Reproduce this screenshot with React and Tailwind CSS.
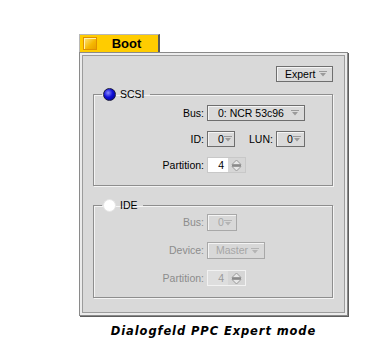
import React from "react";

const Arrow = ({ dim }) => (
  <svg width="8" height="6" viewBox="0 0 8 6" className="shrink-0">
    <line x1="0" y1="0.5" x2="8" y2="0.5" stroke={dim ? "#b4b4b4" : "#9a9a9a"} />
    <path d="M1 2 L7 2 L4 5.5 Z" fill={dim ? "#b4b4b4" : "#9a9a9a"} />
  </svg>
);

const Popup = ({ label, w, h = "h-[16px]", dim, pl = "pl-[10px]" }) => (
  <div
    className={`${w} ${h} ${pl} pr-[5px] shrink-0 justify-self-start flex items-center justify-between border ${
      dim
        ? "border-[#a8a8a8] text-[#a6a6a6] bg-[#d8d8d8]"
        : "border-[#6e6e6e] text-black bg-[#dadada]"
    } shadow-[inset_1px_1px_0_#f4f4f4]`}
  >
    <span className="leading-none">{label}</span>
    <Arrow dim={dim} />
  </div>
);

const Spinner = ({ dim }) => (
  <div className={`flex justify-self-start h-[16px] border ${dim ? "border-[#f2f2f2]" : "border-[#c8c8c8]"}`}>
    <div
      className={`w-[20px] flex items-center justify-end pr-[4px] leading-none ${
        dim ? "bg-[#dedede] text-[#9a9a9a]" : "bg-white text-black"
      }`}
    >
      4
    </div>
    <div className="w-[17px] flex items-center justify-center bg-[#d6d6d6]">
      <svg width="11" height="13" viewBox="0 0 11 13" className="shrink-0">
        <path d="M1 5.5 L5.5 1 L10 5.5 Z" fill="#e8e8e8" stroke="#9a9a9a" />
        <path d="M1 7.5 L5.5 12 L10 7.5 Z" fill="#e8e8e8" stroke="#9a9a9a" />
        <line x1="1" y1="6.5" x2="10" y2="6.5" stroke="#8a8a8a" />
      </svg>
    </div>
  </div>
);

const Group = ({ title, active, children, pt, pb, gap }) => (
  <fieldset className="border border-[#8e8e8e] shadow-[inset_1px_1px_0_#f4f4f4,1px_1px_0_#f4f4f4] p-0 m-0 min-w-0">
    <legend className="ml-[8px] pl-[1px] pr-[5px] h-[14px] flex items-center gap-[4px]">
      {active ? (
        <span className="w-[13px] h-[13px] rounded-full border border-[#1a1a40] bg-[radial-gradient(circle_at_38%_35%,#8a8aff_0%,#1010d8_45%,#00007a_100%)]" />
      ) : (
        <span className="w-[13px] h-[13px] rounded-full bg-white border border-[#e6e6e6]" />
      )}
      <span className="text-black leading-none">{title}</span>
    </legend>
    <div className={`grid grid-cols-[110px_auto] justify-items-start gap-x-[3px] ${gap} items-center ${pt} ${pb}`}>
      {children}
    </div>
  </fieldset>
);

const Label = ({ children, dim }) => (
  <div className={`justify-self-stretch text-right leading-none ${dim ? "text-[#8c8c8c]" : "text-black"}`}>{children}</div>
);

export default function App() {
  return (
    <div className="min-h-screen bg-white pt-[34px] pl-[79px] font-['Liberation_Sans',Arial,sans-serif] text-[10.5px]">
      <div className="w-[269px]">
        {/* tab */}
        <div className="w-[81px] h-[18px] bg-[#ffcc00] border-t border-l border-[#b8b8b8] border-r-2 border-r-[#5a5a5a] flex items-center pl-[3px]">
          <span className="w-[14px] h-[13px] border border-[#e09000] bg-[linear-gradient(135deg,#ffe680,#f5b800_60%,#e8a000)] shadow-[inset_1px_1px_0_#fff2b0]" />
          <span className="flex-1 text-center font-bold text-[13px] leading-none text-black pr-[2px]">Boot</span>
        </div>

        {/* window */}
        <div className="h-[264px] border border-[#8a8a8a] bg-[#ececec] p-[2px] shadow-[1px_1px_0_#5e5e5e]">
          <div className="h-full border border-[#9c9c9c] bg-[#d9d9d9] pl-[10px] pr-[11px] pt-[10px] flex flex-col">
            <div className="flex justify-end">
              <Popup label="Expert" w="w-[57px]" pl="pl-[8px]" />
            </div>

            <div className="mt-[5px]">
              <Group title="SCSI" active pt="pt-[4px]" pb="pb-[12px]" gap="gap-y-[10px]">
                <Label>Bus:</Label>
                <Popup label="0: NCR 53c96" w="w-[98px]" />
                <Label>ID:</Label>
                <div className="flex items-center">
                  <Popup label="0" w="w-[28px]" />
                  <span className="ml-[14px] mr-[3px] leading-none">LUN:</span>
                  <Popup label="0" w="w-[29px]" />
                </div>
                <Label>Partition:</Label>
                <Spinner />
              </Group>
            </div>

            <div className="mt-[12px]">
              <Group title="IDE" pt="pt-[2px]" pb="pb-[11px]" gap="gap-y-[11px]">
                <Label dim>Bus:</Label>
                <Popup label="0" w="w-[30px]" h="h-[17px]" dim />
                <Label dim>Device:</Label>
                <Popup label="Master" w="w-[58px]" h="h-[17px]" pl="pl-[8px]" dim />
                <Label dim>Partition:</Label>
                <Spinner dim />
              </Group>
            </div>
          </div>
        </div>

        <div className="mt-[7px] text-center font-['DejaVu_Sans',sans-serif] font-bold italic text-[11.5px] tracking-[0.9px] text-black">
          Dialogfeld PPC Expert mode
        </div>
      </div>
    </div>
  );
}
